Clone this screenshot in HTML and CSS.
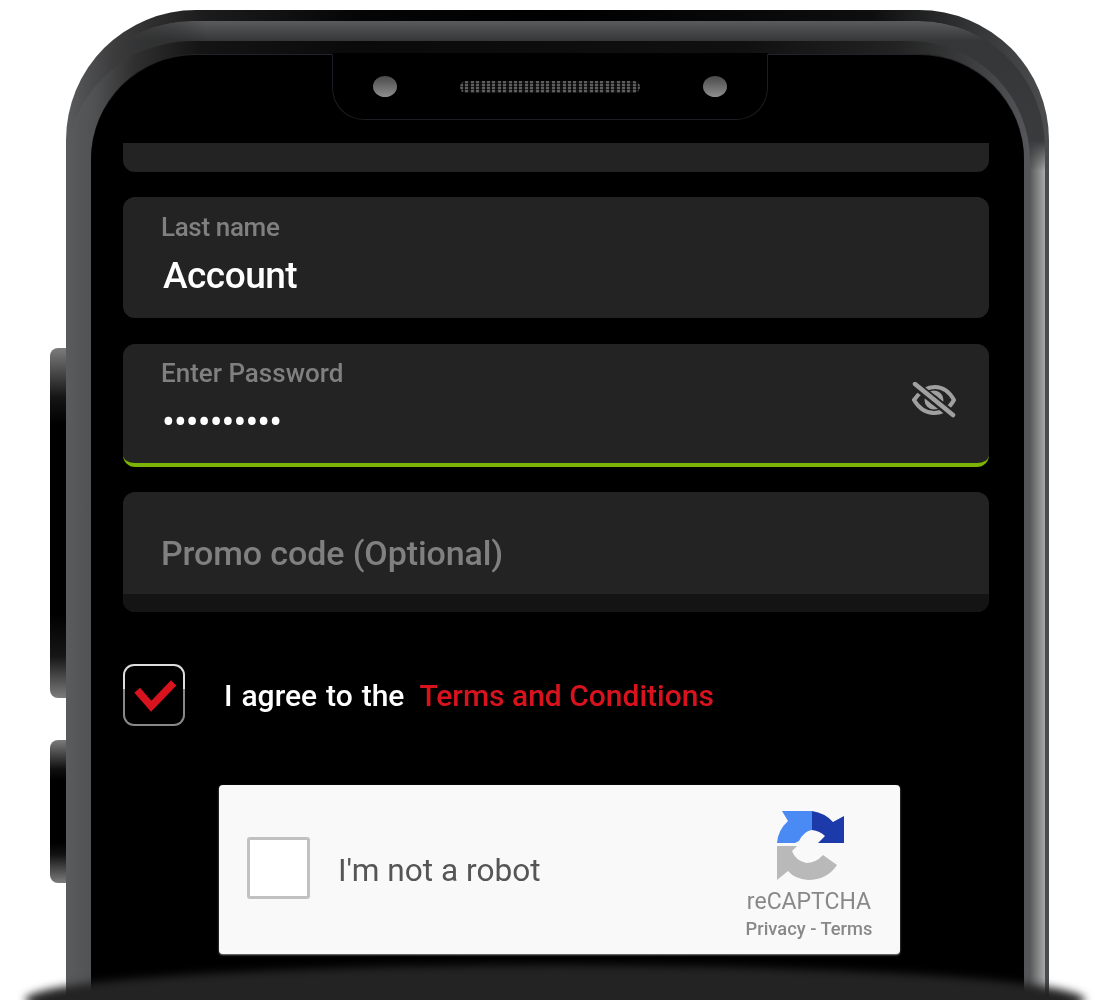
FILE: index.html
```html
<!DOCTYPE html>
<html lang="en">
<head>
  <meta charset="UTF-8">
  <title>Sign up</title>
  <link rel="stylesheet" href="styles.css">
</head>
<body>
  <div class="page">
    <div class="side-btn side-btn-long"></div>
    <div class="side-btn side-btn-short"></div>

    <div class="phone">
      <div class="phone-mid">
        <div class="screen">

          <!-- Notch -->
          <div class="notch">
            <span class="lens"></span>
            <span class="speaker"></span>
            <span class="lens"></span>
          </div>

          <div class="content">
            <div class="field field-cut"><span class="cut-text">Test</span></div>

            <div class="field">
              <label class="field-label">Last name</label>
              <div class="field-value">Account</div>
            </div>

            <div class="field field-active">
              <label class="field-label">Enter Password</label>
              <div class="field-dots">••••••••••</div>
              <svg class="eye" viewBox="0 0 44 36" width="44" height="36">
                <path d="M2 18 C9 8 16 5 23 5 C31 5 37 9 42 18 C37 27 30 31 22 31 C15 31 8 28 2 18 Z" fill="none" stroke="#a0a0a0" stroke-width="4"/>
                <circle cx="22" cy="18" r="7" fill="none" stroke="#a0a0a0" stroke-width="5"/>
                <path d="M3 3 L41 33" stroke="#232323" stroke-width="9"/>
                <path d="M3 2 L41 33" stroke="#a0a0a0" stroke-width="4.5" stroke-linecap="round"/>
              </svg>
            </div>

            <div class="field field-promo">
              <div class="promo-text">Promo code (Optional)</div>
              <div class="promo-foot"></div>
            </div>

            <div class="agree">
              <div class="agree-box">
                <svg viewBox="0 0 62 62" width="58" height="58">
                  <path d="M13 26 L28 43 L52 18" fill="none" stroke="#d9131e" stroke-width="8"/>
                </svg>
              </div>
              <span class="agree-text">I agree to the</span>
              <a class="agree-link">Terms and Conditions</a>
            </div>

            <div class="captcha">
              <div class="captcha-box"></div>
              <div class="captcha-text">I'm not a robot</div>
              <div class="captcha-brand">
                <svg viewBox="0 0 72 72" width="72" height="72">
                  <path d="M2 33 Q3 20 13 11 L7 1 H37 V20 Q29 21 24 31 L20 33 Z" fill="#4a8af4"/>
                  <path d="M37 1 Q50 3 58 12 L69 6 V33 H43 L50 26 Q45 21 37 20 Z" fill="#1c3aa9"/>
                  <path d="M2 36 H22 L17 41 Q20 50 31 53 Q41 53 48 45 L62 55 Q52 70 33 70 Q20 69 13 61 L2 70 Z" fill="#b9b9b9"/>
                </svg>
                <div class="brand-name">reCAPTCHA</div>
                <div class="brand-links">Privacy - Terms</div>
              </div>
            </div>
          </div>

        </div>
      </div>
    </div>

    <div class="ground"></div>
  </div>
</body>
</html>
```

FILE: styles.css
```css
body {
  margin: 0;
  background: #fff;
  font-family: Roboto, "Liberation Sans", sans-serif;
}

.page {
  position: relative;
  width: 1100px;
  height: 1000px;
  overflow: hidden;
  padding: 10px 0 0 66px;
  box-sizing: border-box;
}

/* Phone body */
.phone {
  position: relative;
  width: 983px;
  height: 1040px;
  border-radius: 130px 130px 0 0;
  background: linear-gradient(90deg, #5a5b5d 0, #3c3c3d 5%, #1c1c1c 14%, #050505 30%, #000 50%, #0e0e0e 82%, #333435 92%, #4c4d4f 100%);
  padding-top: 31px;
  box-sizing: border-box;
}

.phone::before {
  content: "";
  position: absolute;
  top: 11px;
  left: 0;
  right: 4px;
  bottom: 0;
  border-radius: 126px 126px 0 0;
  background: linear-gradient(180deg, #5a5b5d 0, #353637 20px, #3a3b3c 120px, rgba(60,60,60,0) 150px), linear-gradient(90deg, #555 0, #555 98.4%, #a8a9ab 100%);
  -webkit-mask-image: linear-gradient(90deg, transparent 40px, #000 140px);
  mask-image: linear-gradient(90deg, transparent 40px, #000 140px);
}

.phone-mid {
  position: relative;
  width: 964px;
  height: 1009px;
  padding-top: 14px;
  box-sizing: border-box;
  border-radius: 126px 120px 0 0;
  background: linear-gradient(90deg, #5a5b5d 0, #505153 3%, #303030 7%, #141414 14%, #0a0a0a 30%, #101010 70%, #222 86%, #3c3d3e 94%, #56575a 100%);
}

.screen {
  width: 933px;
  height: 995px;
  margin-left: 25px;
  background: #000;
  border-radius: 105px 105px 0 0;
  box-shadow: 0 -1px 0 #222228;
}

.notch {
  position: relative;
  top: -1px;
  width: 354px;
  height: 65px;
  margin-left: 241px;
  padding: 0 40px;
  background: #000;
  border: 1px solid #1c1c22;
  border-top: 0;
  border-radius: 0 0 32px 32px;
  display: flex;
  align-items: center;
  justify-content: space-between;
  box-shadow: 0 -1px 0 #000;
}

.lens {
  width: 24px;
  height: 21px;
  border-radius: 50%;
  background: linear-gradient(180deg, #4a4a4a, #8e8e8e);
}

.speaker {
  width: 180px;
  height: 12px;
  border-radius: 6px;
  background: repeating-linear-gradient(180deg, transparent 0 2px, rgba(0,0,0,0.6) 2px 3px), repeating-linear-gradient(90deg, #5e5e5e 0 3px, #141414 3px 5.4px);
}

.content {
  display: flex;
  flex-direction: column;
  gap: 25px;
  margin: 22px 35px 0 32px;
  filter: blur(0.6px);
}

/* Form fields */
.field {
  position: relative;
  background: #232323;
  border-radius: 12px;
  height: 121px;
  overflow: hidden;
}

.field-cut {
  height: 29px;
  border-radius: 0 0 12px 12px;
}

.cut-text {
  display: block;
  margin: -29px 0 0 42px;
  font-size: 34px;
  line-height: 34px;
  color: #555;
}

.field-label {
  display: block;
  margin: 15px 0 0 38px;
  font-size: 26px;
  line-height: 30px;
  letter-spacing: -0.35px;
  font-weight: 500;
  color: #808080;
}

.field-value {
  margin: 13px 0 0 40px;
  font-size: 37px;
  line-height: 42px;
  font-weight: 500;
  letter-spacing: -0.5px;
  color: #fff;
}

.field-active {
  height: 123px;
  margin-top: 1px;
  box-sizing: border-box;
  border-bottom: 4px solid #7cb305;
}

.field-active .field-label {
  margin-top: 14px;
  letter-spacing: 0;
}

.field-dots {
  margin: 15px 0 0 39px;
  font-size: 38px;
  line-height: 38px;
  letter-spacing: -0.9px;
  color: #fff;
}

.eye {
  position: absolute;
  right: 33px;
  top: 38px;
}

.field-promo {
  height: 120px;
}

.promo-text {
  margin: 39px 0 0 38px;
  font-size: 34px;
  line-height: 44px;
  font-weight: 500;
  letter-spacing: -0.1px;
  color: #808080;
}

.promo-foot {
  position: absolute;
  left: 0;
  right: 0;
  bottom: 0;
  height: 18px;
  background: #141414;
}

/* Terms row */
.agree {
  display: flex;
  align-items: center;
  margin-top: 27px;
  height: 62px;
  font-size: 30px;
  font-weight: 500;
}

.agree-box {
  width: 58px;
  height: 58px;
  border: 2px solid transparent;
  border-radius: 11px;
  background: linear-gradient(#000, #000) padding-box, linear-gradient(180deg, #ddd 0, #ddd 40%, #888 40%, #888 100%) border-box;
  margin-right: 39px;
}

.agree-box svg {
  display: block;
}

.agree-text {
  color: #fff;
  margin-right: 15px;
  word-spacing: 1.5px;
}

.agree-link {
  color: #d9131e;
}

/* Captcha */
.captcha {
  display: flex;
  align-items: center;
  width: 681px;
  height: 169px;
  margin: 34px 0 0 96px;
  background: #f9f9f9;
  border-radius: 4px;
  box-shadow: 0 1px 2px #888;
  padding-left: 28px;
  box-sizing: border-box;
}

.captcha-box {
  width: 57px;
  height: 56px;
  background: #fff;
  border: 3px solid #c1c1c1;
  border-radius: 3px;
  margin-top: -3px;
}

.captcha-text {
  margin-left: 28px;
  margin-top: 2px;
  font-size: 31.6px;
  color: #555;
}

.captcha-brand {
  margin-left: auto;
  margin-right: 27px;
  padding-top: 10px;
  width: 128px;
  text-align: center;
  color: #888;
}

.captcha-brand svg {
  display: block;
  margin: 0 auto;
  position: relative;
  left: 2px;
}

.brand-name {
  margin-top: 7px;
  font-size: 23px;
  line-height: 26px;
}

.brand-links {
  margin-top: 3px;
  font-size: 18.3px;
  line-height: 22px;
  font-weight: 500;
  white-space: nowrap;
}

/* Buttons on the left edge */
.side-btn {
  position: absolute;
  left: 50px;
  width: 16px;
  border-radius: 8px 0 0 8px;
  background: linear-gradient(180deg, #7c7c7c 0, #111 20%, #000 28%, #000 72%, #111 80%, #7c7c7c 100%);
}

.side-btn-long {
  top: 348px;
  height: 350px;
  background: linear-gradient(180deg, #7c7c7c 0, #151515 14%, #000 22%, #000 76%, #151515 88%, #7c7c7c 100%);
}

.side-btn-short {
  top: 740px;
  height: 143px;
}

/* Shadow the phone stands on */
.ground {
  position: absolute;
  left: 25px;
  top: 965px;
  width: 1060px;
  height: 70px;
  border-radius: 50%;
  background: #232323;
  filter: blur(4px);
}
```
